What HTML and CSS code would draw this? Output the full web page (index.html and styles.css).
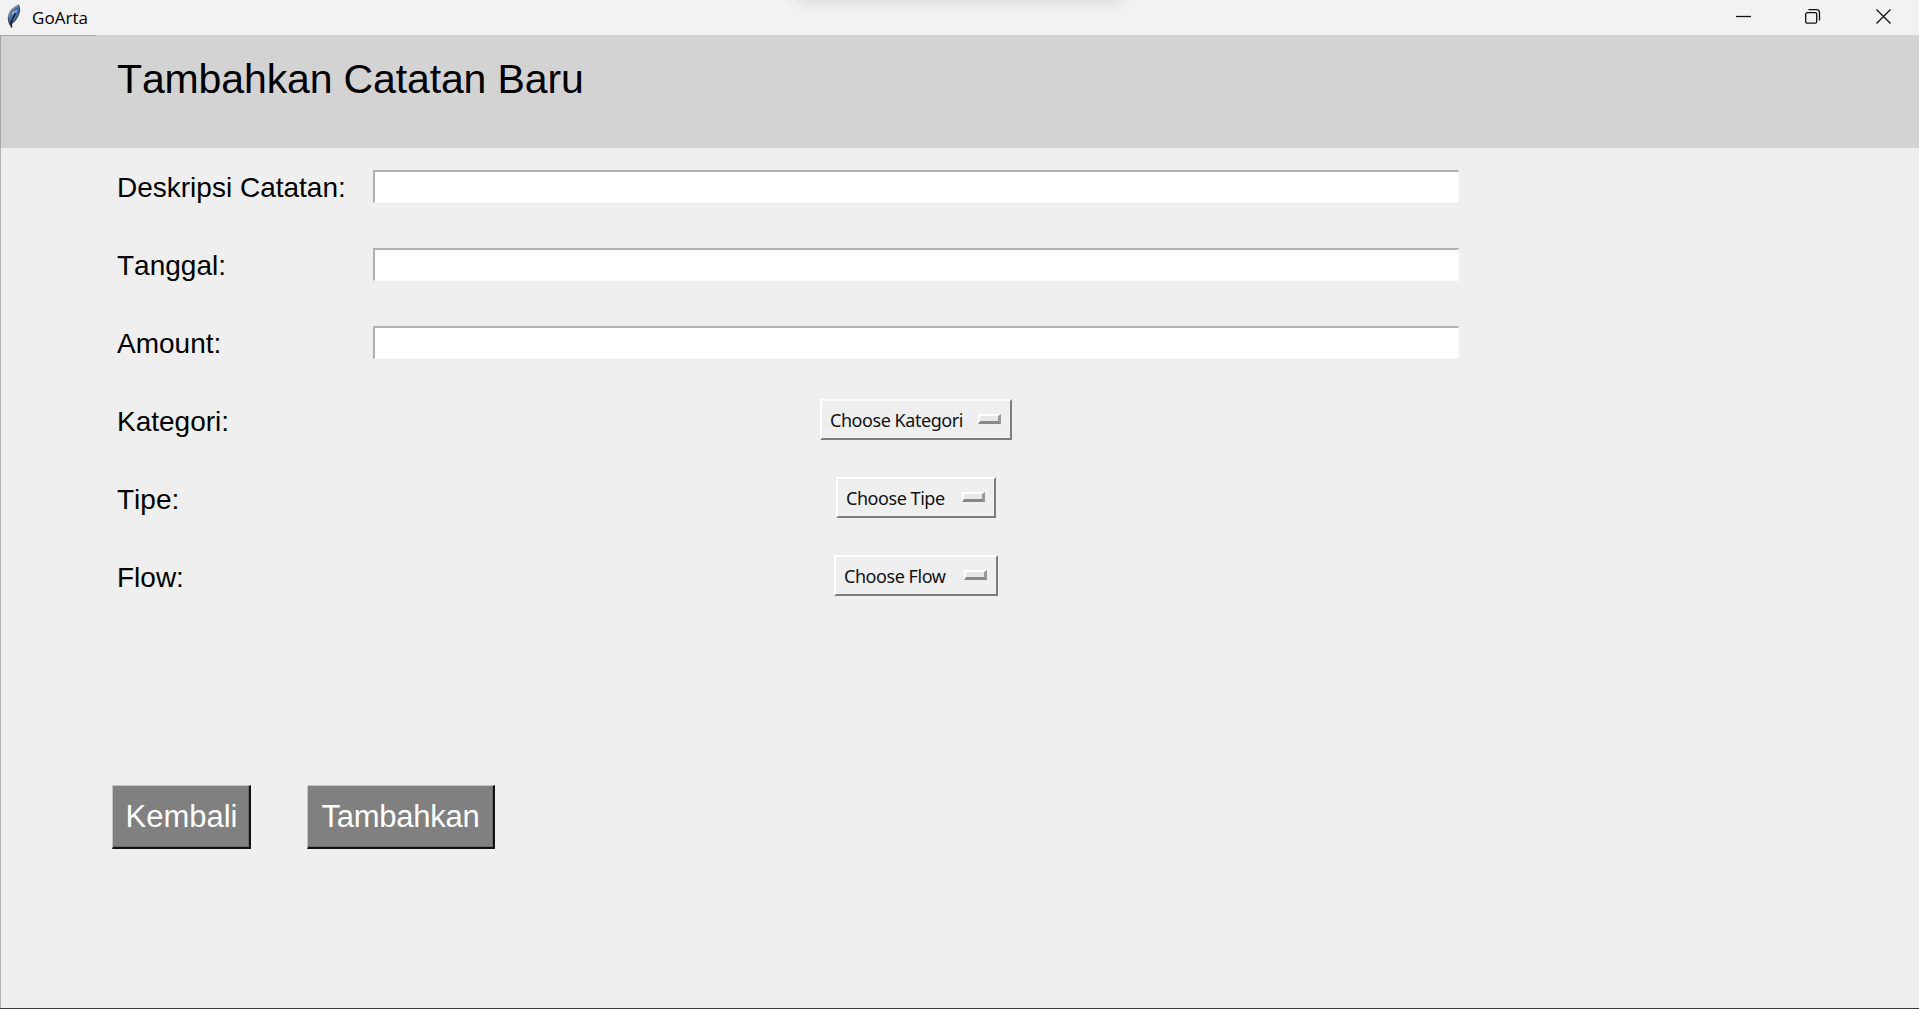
FILE: index.html
```html
<!DOCTYPE html>
<html lang="id">
<head>
<meta charset="utf-8">
<title>GoArta</title>
<link rel="stylesheet" href="styles.css">
</head>
<body>
<div class="window">
  <div class="titlebar">
    <svg class="feather" width="16" height="26" viewBox="0 0 16 26">
      <path d="M4 20.500C0.500 14 3 6 12.500 1.500C15.200 6 12 16 4 20.500Z" fill="#3f70b5" stroke="#44525f" stroke-width="1.400"/>
      <path d="M2.800 13C3 8 7 4 12 2" fill="none" stroke="#8c9295" stroke-width="1.700"/>
      <path d="M10.500 6L6 17M8 7L6 11" stroke="#8fc0ee" stroke-width="1.400"/>
      <path d="M9.500 9L5 18.500L5.500 23.500" fill="none" stroke="#15191f" stroke-width="1.700"/>
    </svg>
    <span class="app-name">GoArta</span>
    <div class="window-controls">
      <svg width="17" height="17" viewBox="0 0 17 17"><path d="M1 8.500H16"/></svg>
      <svg width="17" height="17" viewBox="0 0 17 17"><rect x="0.700" y="4.700" width="11" height="10.500" rx="1.500"/><path d="M3.500 1.700H11.500Q14.500 1.700 14.500 4.700V12.500"/></svg>
      <svg width="17" height="17" viewBox="0 0 17 17"><path d="M1.500 1.500L15.500 15.500M15.500 1.500L1.500 15.500"/></svg>
    </div>
  </div>
  <main class="client">
    <header class="header"><h1>Tambahkan Catatan Baru</h1></header>
    <form class="form">
      <label for="desc">Deskripsi Catatan:</label><input id="desc" class="entry" type="text">
      <label for="date">Tanggal:</label><input id="date" class="entry" type="text">
      <label for="amount">Amount:</label><input id="amount" class="entry" type="text">
      <label>Kategori:</label><button type="button" class="option kategori"><span>Choose Kategori</span><i class="indicator"></i></button>
      <label>Tipe:</label><button type="button" class="option tipe"><span>Choose Tipe</span><i class="indicator"></i></button>
      <label>Flow:</label><button type="button" class="option flow"><span>Choose Flow</span><i class="indicator"></i></button>
    </form>
    <div class="actions">
      <button type="button" class="action back"><span>Kembali</span></button>
      <button type="button" class="action add"><span>Tambahkan</span></button>
    </div>
  </main>
</div>
</body>
</html>
```
FILE: styles.css
```css
* { box-sizing: border-box; }
body { margin: 0; background: #efefef; font-family: "Liberation Sans", Arial, sans-serif; font-kerning: none; overflow: hidden; }
.window { height: 1009px; display: flex; flex-direction: column; border-bottom: 1px solid #3b3b3b; }
.titlebar { position: relative; height: 35px; flex: none; display: flex; align-items: flex-start; background: #f2f2f2; overflow: hidden; }
.titlebar::before { content: ""; position: absolute; left: 796px; top: -20px; width: 326px; height: 20px; box-shadow: 0 0 16px rgba(0, 0, 0, .13); }
.feather { margin: 4px 0 0 6px; }
.app-name { margin: 5px 0 0 10px; font: 17px/25px "Open Sans", sans-serif; letter-spacing: .05px; color: #000; }
.window-controls { margin: 8px 27px 0 auto; display: flex; gap: 53px; }
.window-controls svg { fill: none; stroke: #111; stroke-width: 1.3; }
.client { flex: 1; background: linear-gradient(#b4b4b4, #b4b4b4) no-repeat 0 0 / 1px 100%; }
.header { height: 113px; padding: 20px 0 0 117px; background: linear-gradient(#a9a9a9, #a9a9a9) no-repeat 0 0 / 96px 1px, linear-gradient(#a5a5a5, #a5a5a5) no-repeat 0 0 / 1px 100%, #d3d3d3; }
h1 { margin: 0; font-size: 41px; line-height: 48px; font-weight: 400; letter-spacing: -.13px; color: #000; }
.form { display: grid; grid-template-columns: 256px 1086px; grid-auto-rows: 78px; align-items: center; padding-left: 117px; margin-top: -1px; }
label { font-size: 28px; line-height: 32px; padding-top: 3px; color: #000; }
.entry { width: 1086px; height: 33px; padding: 2px 4px; background: #fff; border: solid; border-width: 2px 1px 1px 2px; border-color: #b0b0b0 #fafafa #fafafa #b0b0b0; border-radius: 0; outline: 0; font: 18px "Open Sans", sans-serif; }
.option { justify-self: center; height: 41px; margin-bottom: 2px; display: flex; align-items: center; justify-content: space-between; padding: 0 9px 0 8px; background: #efefef; border: 2px solid; border-color: #fff #7c7c7c #7c7c7c #fff; color: #111; font: 18px/24px "Noto Sans", sans-serif; letter-spacing: -.45px; white-space: nowrap; }
.option span { padding-top: 2px; }
.kategori { width: 192px; }
.tipe { width: 160px; }
.flow { width: 164px; }
.indicator { width: 23px; height: 10px; background: #e8e8e8; border: 2px solid; border-width: 2px 3px 3px 2px; border-color: #fff #999 #888 #fff; }
.actions { display: flex; gap: 56px; padding: 170px 0 0 112px; }
.action { height: 64px; padding: 1px 0 0 1px; background: #808080; border: solid; border-width: 1px 2px 2px 1px; border-color: #c4c4c4 #111 #111 #c4c4c4; box-shadow: inset -1px -1px #696969; color: #fff; font: 31px/36px "Liberation Sans", Arial, sans-serif; }
.back { width: 139px; }
.add { width: 188px; padding-left: 0; letter-spacing: -.25px; }
```
